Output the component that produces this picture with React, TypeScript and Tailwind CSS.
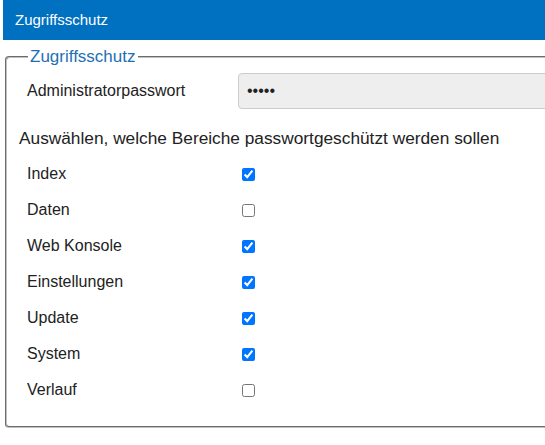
import React from 'react';

interface Area {
  name: string;
  checked: boolean;
}

const areas: Area[] = [
  { name: 'Index', checked: true },
  { name: 'Daten', checked: false },
  { name: 'Web Konsole', checked: true },
  { name: 'Einstellungen', checked: true },
  { name: 'Update', checked: true },
  { name: 'System', checked: true },
  { name: 'Verlauf', checked: false }
];

export default function App() {
  return (
    <div className="w-[545px] h-[445px] overflow-hidden bg-white font-['Liberation_Sans',Arial,sans-serif] text-[#222]">
      <div className="ml-[3px] h-[40px] flex items-center pl-[12px] bg-[#0070c0] text-white text-[15px]">
        Zugriffsschutz
      </div>

      <fieldset className="mt-[7px] ml-[5px] w-[600px] border-2 [border-style:groove] border-[#c0c0c0] rounded-[4px] pl-[12px] pb-[18px]">
        <legend className="ml-[9px] px-[2px] text-[17px] leading-[20px] text-[#1f6fb6]">
          Zugriffsschutz
        </legend>

        <div className="mt-[6px] flex items-center h-[36px]">
          <label className="w-[219px] pl-[8px] text-[16px]">Administratorpasswort</label>
          <input
            type="password"
            defaultValue="12345"
            readOnly
            className="w-[340px] h-[36px] px-[8px] bg-[#eeeeee] border border-[#cccccc] rounded-[4px] text-[16px] outline-none"
          />
        </div>

        <p className="mt-[17px] text-[17.3px] leading-[24px] whitespace-nowrap">
          Auswählen, welche Bereiche passwortgeschützt werden sollen
        </p>

        <div className="mt-[6px]">
          {areas.map((area) => (
            <div key={area.name} className="flex items-center h-[36px]">
              <span className="w-[219px] pl-[8px] text-[16px]">{area.name}</span>
              <input
                type="checkbox"
                defaultChecked={area.checked}
                className="ml-[4px] w-[13px] h-[13px]"
              />
            </div>
          ))}
        </div>
      </fieldset>
    </div>
  );
}
